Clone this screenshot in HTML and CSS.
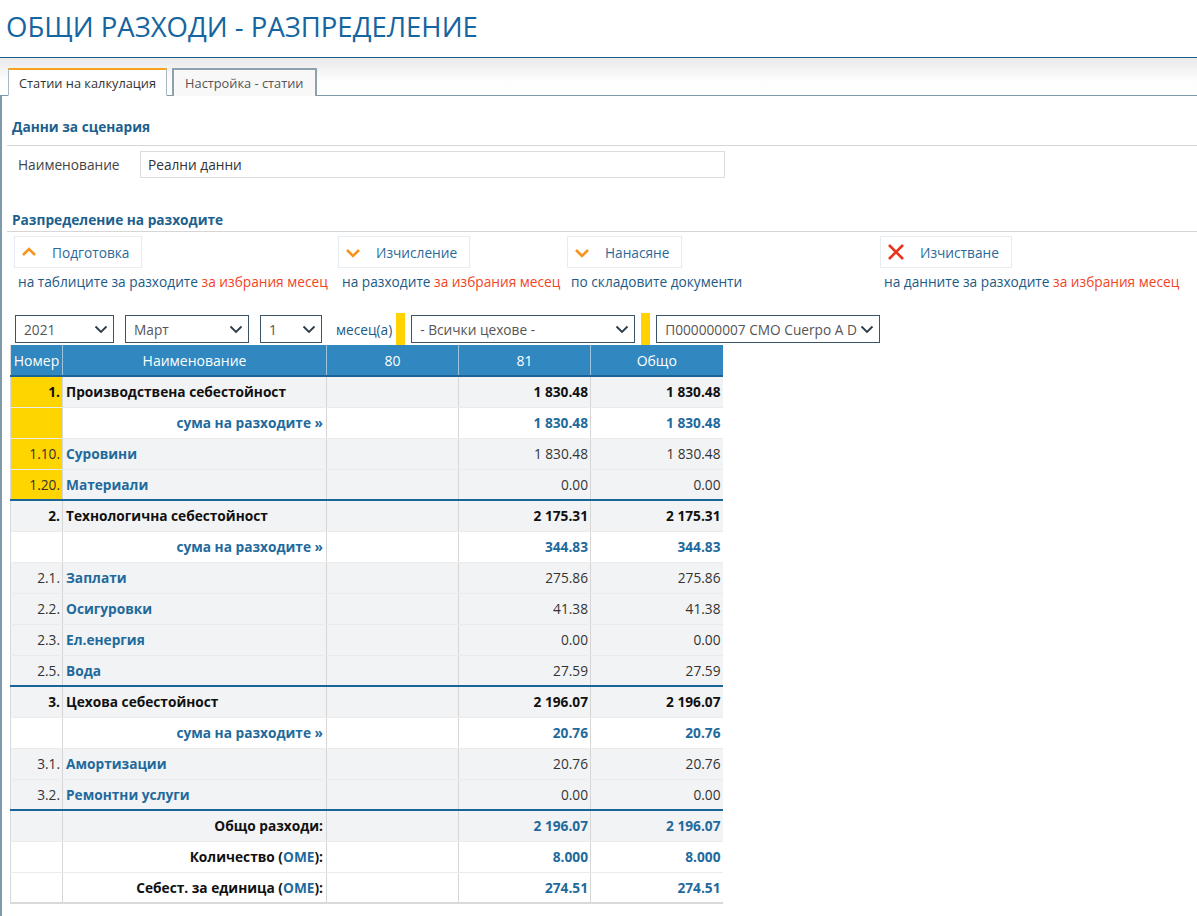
FILE: index.html
```html
<!DOCTYPE html>
<html lang="bg">
<head>
<meta charset="utf-8">
<title>Общи разходи - разпределение</title>
<link rel="stylesheet" href="styles.css">
</head>
<body>
<header class="page-header">
  <h1 class="page-title">ОБЩИ РАЗХОДИ - РАЗПРЕДЕЛЕНИЕ</h1>
</header>
<nav class="tabbar">
  <div class="tab tab-active">Статии на калкулация</div>
  <div class="tab">Настройка - статии</div>
</nav>
<main class="content">
  <section class="section">
    <h2 class="section-title first">Данни за сценария</h2>
    <div class="field">
      <label class="field-label">Наименование</label>
      <div class="text-input">Реални данни</div>
    </div>
  </section>

  <section class="section">
    <h2 class="section-title second">Разпределение на разходите</h2>
    <div class="actions">
      <div class="action">
        <div class="btn">
          <svg class="ico" width="16" height="16" viewBox="0 0 16 16"><path d="M2 11 L8 5 L14 11" fill="none" stroke="#f7941d" stroke-width="2.6"/></svg>
          <span>Подготовка</span>
        </div>
        <div class="desc">на таблиците за разходите <span class="hl">за избрания месец</span></div>
      </div>
      <div class="action">
        <div class="btn">
          <svg class="ico" width="16" height="16" viewBox="0 0 16 16"><path d="M2 6 L8 12 L14 6" fill="none" stroke="#f7941d" stroke-width="2.6"/></svg>
          <span>Изчисление</span>
        </div>
        <div class="desc">на разходите <span class="hl">за избрания месец</span></div>
      </div>
      <div class="action">
        <div class="btn">
          <svg class="ico" width="16" height="16" viewBox="0 0 16 16"><path d="M2 6 L8 12 L14 6" fill="none" stroke="#f7941d" stroke-width="2.6"/></svg>
          <span>Нанасяне</span>
        </div>
        <div class="desc">по складовите документи</div>
      </div>
      <div class="action">
        <div class="btn">
          <svg class="ico" width="18" height="18" viewBox="0 0 18 18"><path d="M2 2 L16 16 M16 2 L2 16" fill="none" stroke="#e8341c" stroke-width="2.6"/></svg>
          <span>Изчистване</span>
        </div>
        <div class="desc">на данните за разходите <span class="hl">за избрания месец</span></div>
      </div>
    </div>
  </section>

  <div class="filters">
    <div class="select w-year"><span>2021</span><svg width="14" height="9" viewBox="0 0 14 9"><path d="M1.5 1.5 L7 7 L12.5 1.5" fill="none" stroke="#2b3b48" stroke-width="1.8"/></svg></div>
    <div class="select w-month"><span>Март</span><svg width="14" height="9" viewBox="0 0 14 9"><path d="M1.5 1.5 L7 7 L12.5 1.5" fill="none" stroke="#2b3b48" stroke-width="1.8"/></svg></div>
    <div class="select w-num"><span>1</span><svg width="14" height="9" viewBox="0 0 14 9"><path d="M1.5 1.5 L7 7 L12.5 1.5" fill="none" stroke="#2b3b48" stroke-width="1.8"/></svg></div>
    <span class="months">месец(а)</span>
    <span class="ybar"></span>
    <div class="select w-wide"><span>- Всички цехове -</span><svg width="14" height="9" viewBox="0 0 14 9"><path d="M1.5 1.5 L7 7 L12.5 1.5" fill="none" stroke="#2b3b48" stroke-width="1.8"/></svg></div>
    <span class="ybar second-bar"></span>
    <div class="select w-wide"><span>П000000007 CMO Cuerpo A D</span><svg width="14" height="9" viewBox="0 0 14 9"><path d="M1.5 1.5 L7 7 L12.5 1.5" fill="none" stroke="#2b3b48" stroke-width="1.8"/></svg></div>
  </div>

  <table class="grid">
    <colgroup>
      <col class="c-num"><col class="c-name"><col class="c-val"><col class="c-val"><col class="c-val">
    </colgroup>
    <thead>
      <tr><th>Номер</th><th>Наименование</th><th>80</th><th>81</th><th>Общо</th></tr>
    </thead>
    <tbody>
      <tr class="r-head"><td class="num yel">1.</td><td class="name">Производствена себестойност</td><td></td><td class="val">1 830.48</td><td class="val">1 830.48</td></tr>
      <tr class="r-sum"><td class="num yel"></td><td class="name">сума на разходите »</td><td></td><td class="val">1 830.48</td><td class="val">1 830.48</td></tr>
      <tr class="r-item"><td class="num yel">1.10.</td><td class="name">Суровини</td><td></td><td class="val">1 830.48</td><td class="val">1 830.48</td></tr>
      <tr class="r-item"><td class="num yel">1.20.</td><td class="name">Материали</td><td></td><td class="val">0.00</td><td class="val">0.00</td></tr>

      <tr class="r-head sep"><td class="num">2.</td><td class="name">Технологична себестойност</td><td></td><td class="val">2 175.31</td><td class="val">2 175.31</td></tr>
      <tr class="r-sum"><td class="num"></td><td class="name">сума на разходите »</td><td></td><td class="val">344.83</td><td class="val">344.83</td></tr>
      <tr class="r-item"><td class="num">2.1.</td><td class="name">Заплати</td><td></td><td class="val">275.86</td><td class="val">275.86</td></tr>
      <tr class="r-item"><td class="num">2.2.</td><td class="name">Осигуровки</td><td></td><td class="val">41.38</td><td class="val">41.38</td></tr>
      <tr class="r-item"><td class="num">2.3.</td><td class="name">Ел.енергия</td><td></td><td class="val">0.00</td><td class="val">0.00</td></tr>
      <tr class="r-item"><td class="num">2.5.</td><td class="name">Вода</td><td></td><td class="val">27.59</td><td class="val">27.59</td></tr>

      <tr class="r-head sep"><td class="num">3.</td><td class="name">Цехова себестойност</td><td></td><td class="val">2 196.07</td><td class="val">2 196.07</td></tr>
      <tr class="r-sum"><td class="num"></td><td class="name">сума на разходите »</td><td></td><td class="val">20.76</td><td class="val">20.76</td></tr>
      <tr class="r-item"><td class="num">3.1.</td><td class="name">Амортизации</td><td></td><td class="val">20.76</td><td class="val">20.76</td></tr>
      <tr class="r-item"><td class="num">3.2.</td><td class="name">Ремонтни услуги</td><td></td><td class="val">0.00</td><td class="val">0.00</td></tr>

      <tr class="r-foot sep gray"><td class="num"></td><td class="name">Общо разходи:</td><td></td><td class="val">2 196.07</td><td class="val">2 196.07</td></tr>
      <tr class="r-foot"><td class="num"></td><td class="name">Количество (<span class="ome">ОМЕ</span>):</td><td></td><td class="val">8.000</td><td class="val">8.000</td></tr>
      <tr class="r-foot"><td class="num"></td><td class="name">Себест. за единица (<span class="ome">ОМЕ</span>):</td><td></td><td class="val">274.51</td><td class="val">274.51</td></tr>
    </tbody>
  </table>
</main>
</body>
</html>
```
FILE: styles.css
```css
* { box-sizing: border-box; }
html, body { margin: 0; padding: 0; background: #fff; }
body {
  font-family: "Open Sans", "Noto Sans", sans-serif;
  font-size: 13.7px;
  color: #333;
}

.page-header {
  height: 58px;
  border-bottom: 1px solid #1b5e8c;
  padding: 8px 0 0 6px;
}
.page-title {
  margin: 0;
  font-size: 27.5px;
  font-weight: 400;
  line-height: 38px;
  color: #1565a0;
}

.tabbar {
  height: 38px;
  background: linear-gradient(#e9e9e9, #fdfdfd 60%, #fff);
  border-bottom: 1px solid #7d98a8;
  display: flex;
  align-items: flex-end;
  gap: 5px;
  padding-left: 8px;
}
.tab {
  height: 28px;
  margin-bottom: -1px;
  padding: 0 11px;
  display: flex;
  align-items: center;
  border: 2px solid #8da2ae;
  border-bottom: none;
  background: #f8f8f8;
  color: #555;
  font-size: 12.8px;
}
.tab-active {
  border: 1px solid #a9b9c3;
  border-top: 2px solid #f7a21b;
  border-bottom: 1px solid #fff;
  background: #fff;
  color: #333;
  padding: 0 10px;
}

.content {
  border-left: 2px solid #7f9aab;
  padding: 0 0 12px 5px;
  min-height: 820px;
}

.section-title {
  margin: 0;
  padding-left: 5px;
  font-size: 13.7px;
  font-weight: 700;
  line-height: 18px;
  color: #1d5f8d;
  border-bottom: 1px solid #d6d6d6;
}
.section-title.first { padding-top: 22px; padding-bottom: 9px; }
.section-title.second { padding-top: 33px; padding-bottom: 2px; }

.field {
  display: flex;
  align-items: center;
  height: 27px;
  margin-top: 5px;
  padding-left: 11px;
}
.field-label {
  width: 122px;
  color: #444;
}
.text-input {
  width: 585px;
  height: 27px;
  border: 1px solid #dcdcdc;
  padding: 0 7px;
  display: flex;
  align-items: center;
  color: #333;
}

.actions {
  display: grid;
  grid-template-columns: 324px 229px 313px 1fr;
  margin-top: 4px;
  padding-left: 7px;
}
.action {
  display: flex;
  flex-direction: column;
  align-items: flex-start;
}
.btn {
  display: flex;
  align-items: center;
  height: 32px;
  padding: 0 12px 0 6px;
  border: 1px solid #e5edf2;
  color: #2a6a9a;
  gap: 15px;
}
.ico { display: block; flex: none; }
.desc {
  margin-top: 5px;
  padding-left: 4px;
  line-height: 18px;
  color: #1d5a85;
  white-space: nowrap;
}
.hl { color: #f0451f; }

.filters {
  display: flex;
  align-items: center;
  height: 32px;
  margin-top: 22px;
  padding-left: 8px;
}
.select {
  height: 28px;
  border: 1px solid #3b5468;
  display: flex;
  align-items: center;
  justify-content: space-between;
  padding: 0 5px 0 8px;
  color: #555;
  background: #fff;
  flex: none;
}
.select svg { flex: none; }
.w-year { width: 99px; margin-right: 11px; }
.w-month { width: 124px; margin-right: 11px; }
.w-num { width: 62px; margin-right: 14px; }
.w-wide { width: 224px; }
.w-wide span { white-space: nowrap; overflow: hidden; }
.months { color: #1d5a85; margin-right: 4px; white-space: nowrap; }
.ybar {
  width: 9px;
  height: 32px;
  background: #ffd200;
  margin-right: 6px;
  flex: none;
}
.second-bar { margin-left: 6px; }

.grid {
  border-collapse: collapse;
  table-layout: fixed;
  width: 712px;
  margin-left: 3px;
  margin-top: 0;
  border-left: 1px solid #d9d9d9;
  border-bottom: 2px solid #d9d9d9;
}
.c-num { width: 52px; }
.c-name { width: 264px; }
.c-val { width: 132px; }

.grid th {
  height: 31px;
  padding: 0;
  background: #3187bf;
  color: #fff;
  font-weight: 400;
  font-size: 14px;
  text-align: center;
  border-right: 1px solid #9cc4de;
  border-bottom: 2px solid #1a6496;
}
.grid th:last-child { border-right: none; }

.grid td {
  height: 31px;
  padding: 0 2px 0 3px;
  border-right: 1px solid #d6d6d6;
  border-bottom: 1px solid #ebebeb;
  background: #f2f3f5;
  white-space: nowrap;
}
.grid td:last-child { border-right: none; }
.grid td.num { text-align: right; padding-right: 2px; color: #333; }
.grid td.yel { background: #ffd500; }
.grid td.val { text-align: right; }

.grid tr.sep td { border-top: 2px solid #1a6496; }

.r-head td { font-weight: 700; color: #111; }
.r-head td.num { color: #111; }

.r-sum td { background: #fff; font-weight: 700; color: #1f6a9c; }
.r-sum td.name { text-align: right; padding-right: 3px; }

.r-item td.name { font-weight: 700; color: #1f6a9c; }
.r-item td.val { color: #333; }

.r-foot td { background: #fff; font-weight: 700; }
.r-foot.gray td { background: #f2f3f5; }
.r-foot td.name { text-align: right; color: #111; padding-right: 3px; }
.r-foot td.val { color: #1f6a9c; }
.ome { color: #1f6a9c; }
```
